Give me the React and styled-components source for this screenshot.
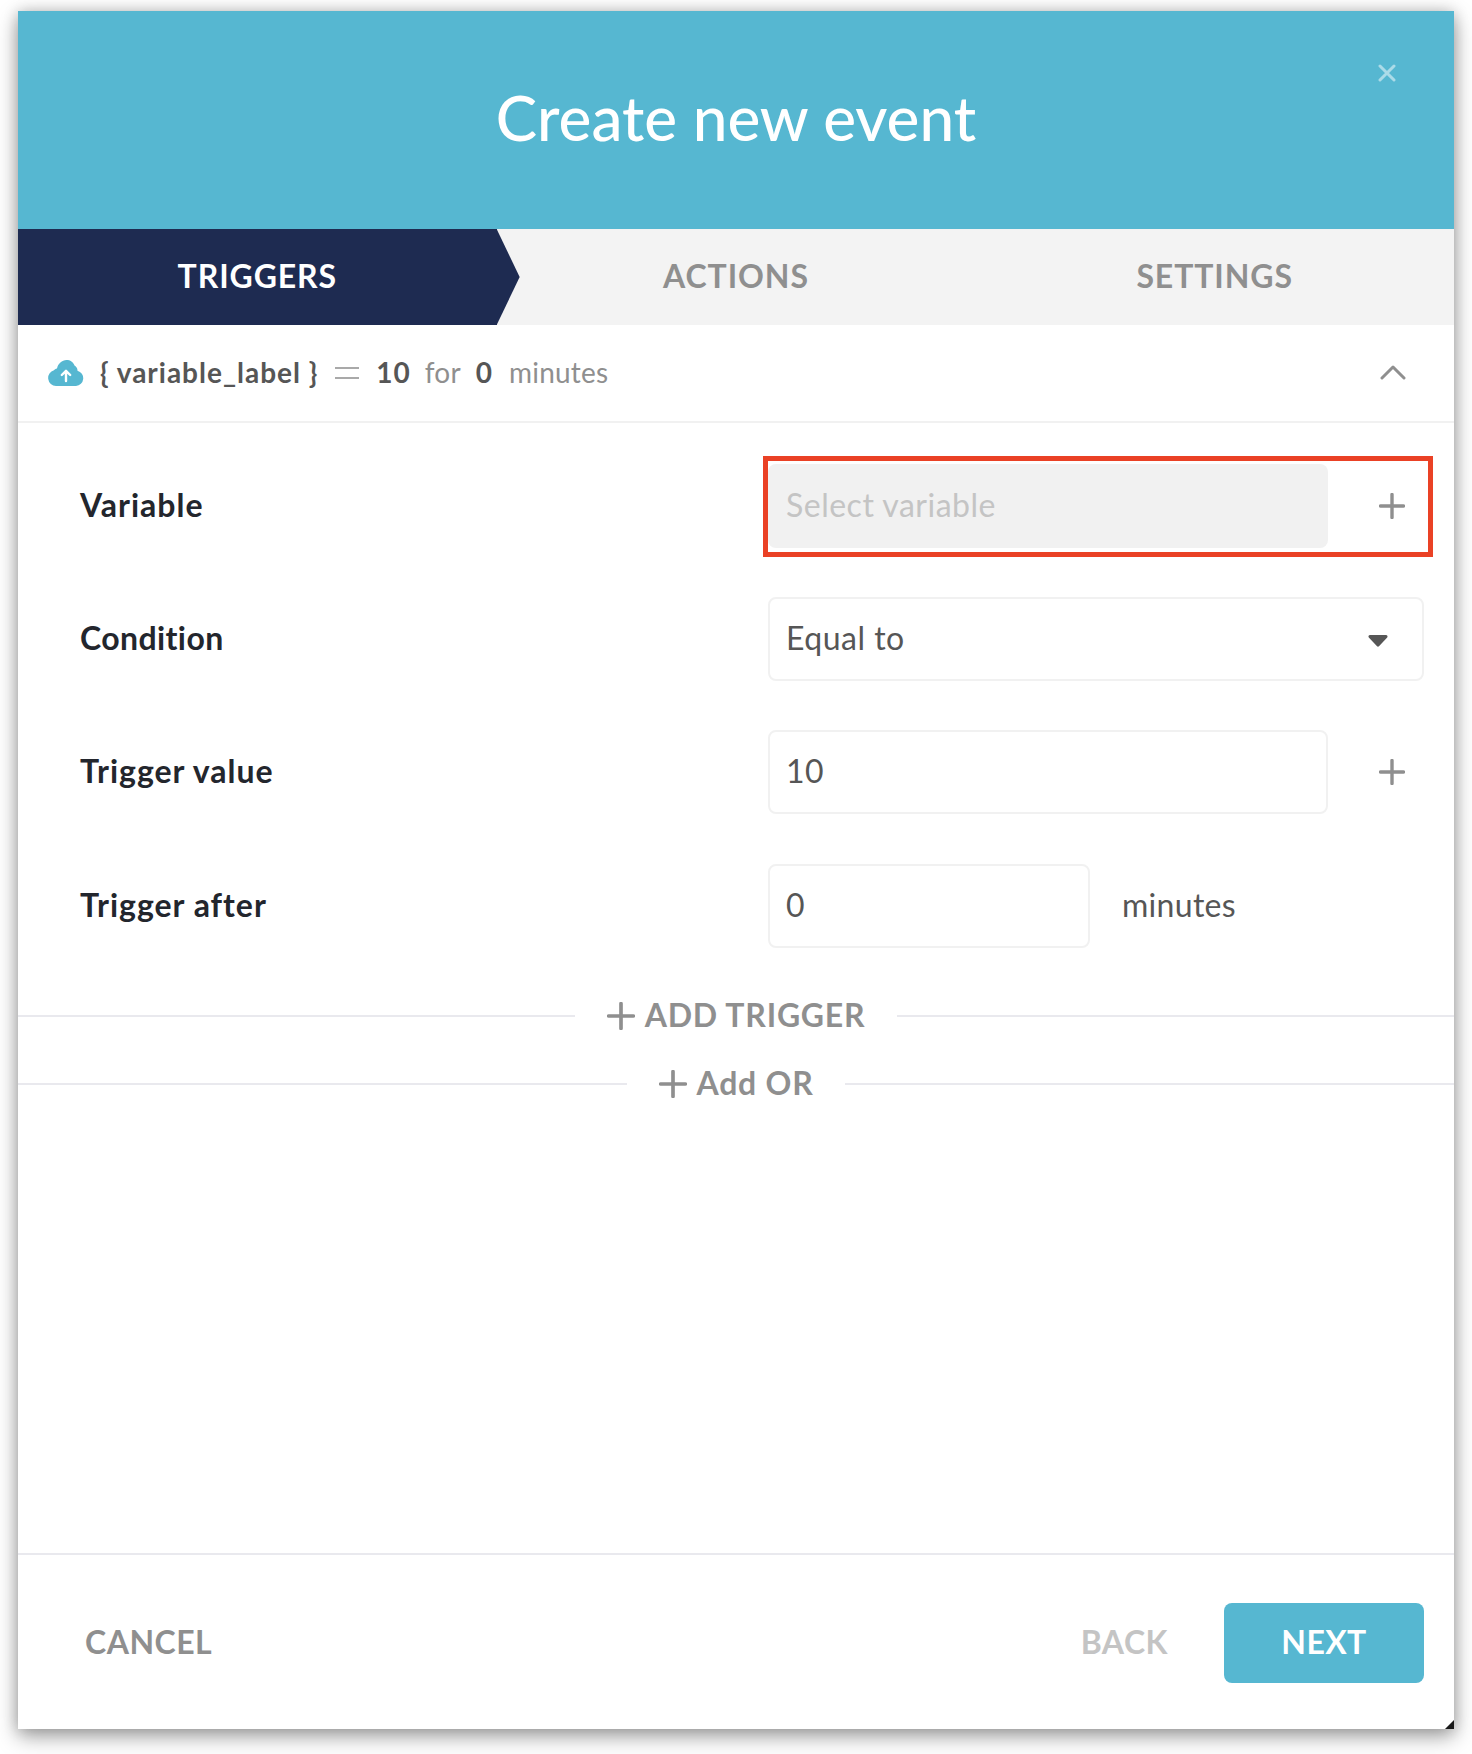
import React from "react";
import styled, { createGlobalStyle } from "styled-components";

const GlobalStyle = createGlobalStyle`
  html, body {
    margin: 0;
    padding: 0;
    background: #fff;
  }
  * {
    box-sizing: border-box;
  }
`;

const Corner = styled.div`
  position: absolute;
  right: 0;
  bottom: 0;
  width: 9px;
  height: 9px;
  background: #1a1a1a;
`;

const Frame = styled.div`
  position: relative;
  width: 1436px;
  height: 1718px;
  margin: 11px 18px 25px;
  box-shadow: 0 8px 20px rgba(0, 0, 0, 0.34), 0 0 14px rgba(0, 0, 0, 0.2);
  font-family: "Lato", "Noto Sans", sans-serif;
  font-variant-ligatures: none;
`;

const Modal = styled.div`
  position: relative;
  display: flex;
  flex-direction: column;
  height: 100%;
  background: #fff;
  clip-path: polygon(0 0, 100% 0, 100% calc(100% - 9px), calc(100% - 9px) 100%, 0 100%);
`;

const Header = styled.header`
  position: relative;
  display: flex;
  justify-content: center;
  align-items: center;
  height: 218px;
  padding-bottom: 7px;
  background: #56b7d1;
`;

const Title = styled.h1`
  margin: 0;
  font-size: 62px;
  font-weight: 500;
  color: #fff;
`;

const Close = styled.svg`
  position: absolute;
  top: 53px;
  right: 58px;
  width: 18px;
  height: 18px;
`;

const Tabs = styled.nav`
  display: grid;
  grid-template-columns: repeat(3, 1fr);
  height: 96px;
  background: #f3f3f3;
`;

const Tab = styled.div`
  position: relative;
  display: flex;
  justify-content: center;
  align-items: center;
  padding-bottom: 4px;
  background: ${(p) => (p.$active ? "#1e2b51" : "transparent")};
  font-size: 32px;
  font-weight: 700;
  letter-spacing: 0.9px;
  color: ${(p) => (p.$active ? "#fff" : "#8f8f8f")};

  &::after {
    content: "";
    display: ${(p) => (p.$active ? "block" : "none")};
    position: absolute;
    top: 0;
    left: 100%;
    width: 23px;
    height: 100%;
    background: #1e2b51;
    clip-path: polygon(0 0, 100% 50%, 0 100%);
  }
`;

const Summary = styled.div`
  display: flex;
  align-items: center;
  height: 98px;
  padding: 0 48px 0 30px;
  border-bottom: 2px solid #f1f1f1;
  font-size: 28px;
  color: #8f8f8f;
`;

const SummaryStrong = styled.strong`
  margin-left: ${(p) => p.$gap || 0}px;
  padding-bottom: 2px;
  font-weight: 700;
  letter-spacing: 1px;
  color: #565656;
`;

const SummaryText = styled.span`
  margin-left: ${(p) => p.$gap || 0}px;
  padding-bottom: 2px;
  letter-spacing: 0.2px;
`;

const Chevron = styled.svg`
  width: 26px;
  height: 15px;
  margin-bottom: 2px;
`;

const Fields = styled.div`
  display: flex;
  flex-direction: column;
  gap: 49px;
  padding: 41px 30px 0 62px;
`;

const Row = styled.div`
  position: relative;
  display: flex;
  align-items: center;
  height: 84px;

  &:last-child {
    margin-top: 1px;
  }
`;

const Label = styled.label`
  width: 688px;
  padding-bottom: 3px;
  font-size: 32px;
  font-weight: 700;
  letter-spacing: ${(p) => p.$spacing ?? 1}px;
  color: #23262d;
`;

const Field = styled.div`
  display: flex;
  justify-content: space-between;
  align-items: center;
  width: ${(p) => p.$width}px;
  height: 84px;
  padding: ${(p) => (p.$disabled ? "0 34px 3px 18px" : "0 34px 3px 16px")};
  border: ${(p) => (p.$disabled ? "none" : "2px solid #f1f1f1")};
  border-radius: 8px;
  background: ${(p) => (p.$disabled ? "#f1f1f1" : "#fff")};
  font-size: 32px;
  letter-spacing: 0.5px;
  color: ${(p) => (p.$disabled ? "#c4c4c4" : "#565656")};
`;

const Highlight = styled.div`
  position: absolute;
  top: -8px;
  left: 683px;
  width: 670px;
  height: 101px;
  border: 5px solid #ea4125;
  pointer-events: none;
`;

const PlusButton = styled.svg`
  flex: none;
  width: 26px;
  height: 26px;
  margin-left: 51px;
`;

const Caret = styled.svg`
  width: 20px;
  height: 13px;
  margin-top: 6px;
`;

const Unit = styled.span`
  margin-left: 32px;
  padding-bottom: 4px;
  font-size: 32px;
  letter-spacing: 0.3px;
  color: #565656;
`;

const AddRow = styled.div`
  display: flex;
  align-items: center;
  margin-top: ${(p) => p.$top}px;
  height: 36px;
  font-size: 32px;
  font-weight: 700;
  letter-spacing: 0.75px;
  color: #8f8f8f;

  &::before,
  &::after {
    content: "";
    flex: 1;
    height: 2px;
    background: #e9e9ee;
  }
`;

const AddInner = styled.div`
  display: flex;
  align-items: center;
  gap: 10px;
  padding: 0 32px;
`;

const AddLabel = styled.span`
  padding-bottom: 4px;
`;

const AddPlus = styled.svg`
  width: 28px;
  height: 28px;
`;

const Spacer = styled.div`
  flex: 1;
`;

const Footer = styled.footer`
  display: flex;
  justify-content: space-between;
  align-items: center;
  height: 176px;
  padding: 2px 30px 0 67px;
  border-top: 2px solid #e9e9ee;
`;

const FooterText = styled.span`
  padding-bottom: 4px;
  font-size: 32px;
  font-weight: 700;
  letter-spacing: 0.5px;
  color: ${(p) => p.$color};
`;

const FooterRight = styled.div`
  display: flex;
  align-items: center;
  gap: 56px;
`;

const NextButton = styled.button`
  width: 200px;
  height: 80px;
  padding: 0 0 4px;
  border: none;
  border-radius: 8px;
  background: #56b7d1;
  font-family: inherit;
  font-size: 32px;
  font-weight: 700;
  letter-spacing: 0.4px;
  color: #fff;
`;

const Plus = ({ as: Comp = PlusButton, color = "#8f8f8f" }) => (
  <Comp viewBox="0 0 26 26">
    <path d="M13 1.5v23M1.5 13h23" stroke={color} strokeWidth="3.4" strokeLinecap="round" fill="none" />
  </Comp>
);

const Cloud = () => (
  <svg width="36" height="26" viewBox="0 0 36 26" style={{ marginRight: 16 }}>
    <path
      d="M8 26a8 8 0 0 1-2-15.7C6.500 9.500 7.500 9 9 8.600 10 3.500 14 0 18.500 0c3.700 0 6.800 2 8 5.500a6 6 0 0 1 3 5.200A7.800 7.800 0 0 1 28 26z"
      fill="#56b7d1"
    />
    <path d="M18 21v-9.500M13.800 15L18 10.800 22.200 15" stroke="#fff" strokeWidth="2.400" fill="none" strokeLinecap="round" strokeLinejoin="round" />
  </svg>
);

const App = () => {
  return (
    <>
      <GlobalStyle />
      <Frame>
        <Corner />
        <Modal>
          <Header>
            <Title>Create new event</Title>
            <Close viewBox="0 0 18 18">
              <path d="M2 2l14 14M16 2L2 16" stroke="#fff" strokeOpacity="0.5" strokeWidth="3" strokeLinecap="round" />
            </Close>
          </Header>
          <Tabs>
            <Tab $active>TRIGGERS</Tab>
            <Tab>ACTIONS</Tab>
            <Tab>SETTINGS</Tab>
          </Tabs>
          <Summary>
            <Cloud />
            <SummaryStrong>{"{ variable_label }"}</SummaryStrong>
            <svg width="24" height="14" viewBox="0 0 24 14" style={{ marginLeft: 17 }}>
              <path d="M0 2h24M0 12h24" stroke="#a9a9a9" strokeWidth="2" />
            </svg>
            <SummaryStrong $gap={17}>10</SummaryStrong>
            <SummaryText $gap={14}>for</SummaryText>
            <SummaryStrong $gap={15}>0</SummaryStrong>
            <SummaryText $gap={16}>minutes</SummaryText>
            <Spacer />
            <Chevron viewBox="0 0 26 15">
              <path d="M2 13L13 2l11 11" stroke="#8f8f8f" strokeWidth="3" strokeLinecap="round" strokeLinejoin="round" fill="none" />
            </Chevron>
          </Summary>
          <Fields>
            <Row>
              <Label>Variable</Label>
              <Field $width={560} $disabled>Select variable</Field>
              <Plus />
              <Highlight />
            </Row>
            <Row>
              <Label $spacing={0.4}>Condition</Label>
              <Field $width={656}>
                Equal to
                <Caret viewBox="0 0 20 13">
                  <path d="M2 1h16a1.500 1.500 0 0 1 1.200 2.400l-8 8.600a1.500 1.500 0 0 1-2.400 0l-8-8.600A1.500 1.500 0 0 1 2 1z" fill="#565656" />
                </Caret>
              </Field>
            </Row>
            <Row>
              <Label>Trigger value</Label>
              <Field $width={560}>10</Field>
              <Plus />
            </Row>
            <Row>
              <Label>Trigger after</Label>
              <Field $width={322}>0</Field>
              <Unit>minutes</Unit>
            </Row>
          </Fields>
          <AddRow $top={50}>
            <AddInner>
              <Plus as={AddPlus} />
              <AddLabel>ADD TRIGGER</AddLabel>
            </AddInner>
          </AddRow>
          <AddRow $top={32}>
            <AddInner>
              <Plus as={AddPlus} />
              <AddLabel>Add OR</AddLabel>
            </AddInner>
          </AddRow>
          <Spacer />
          <Footer>
            <FooterText $color="#8f8f8f">CANCEL</FooterText>
            <FooterRight>
              <FooterText $color="#c4c4c4">BACK</FooterText>
              <NextButton>NEXT</NextButton>
            </FooterRight>
          </Footer>
        </Modal>
      </Frame>
    </>
  );
};

export default App;
